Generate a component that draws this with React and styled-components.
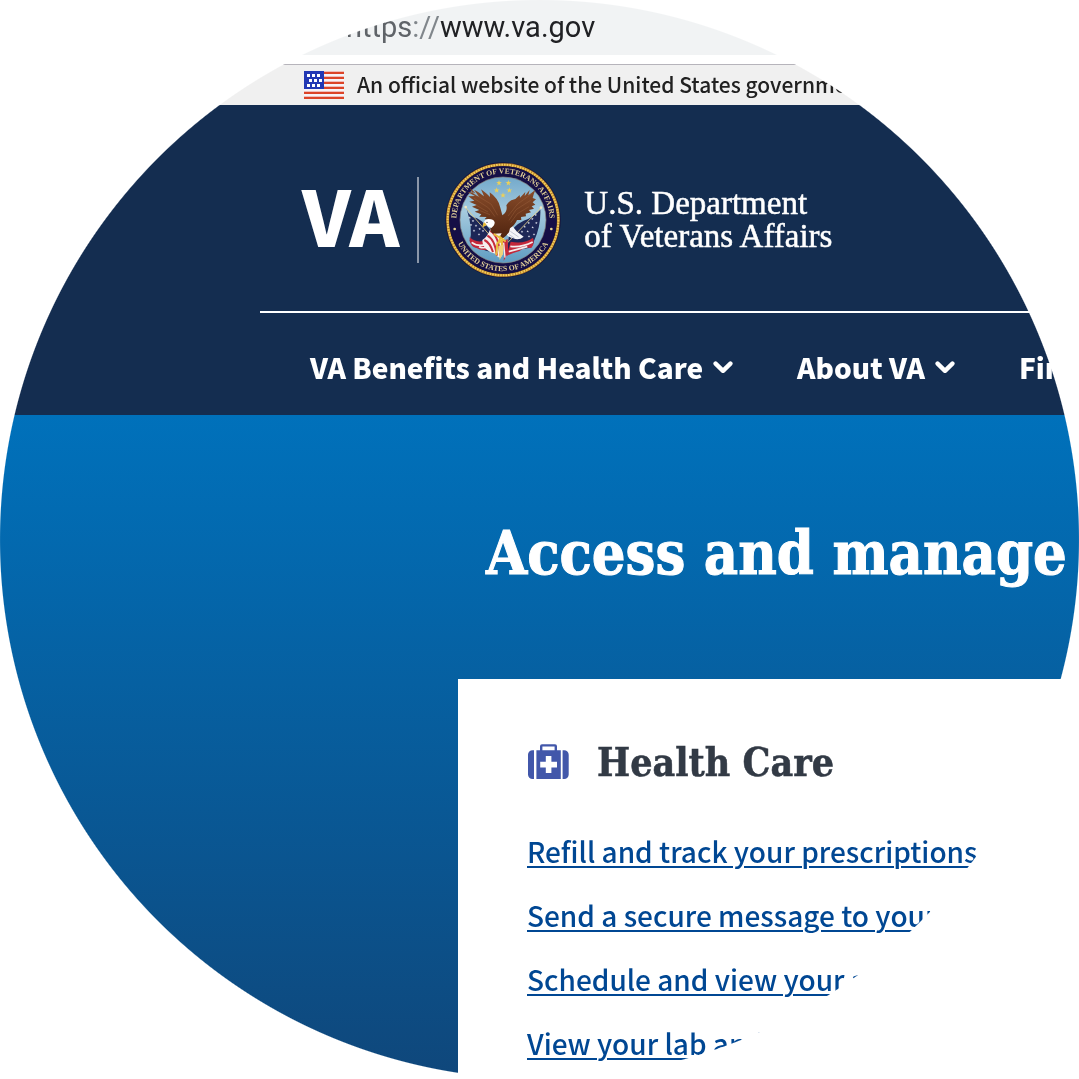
import React from "react";
import styled, { createGlobalStyle } from "styled-components";

const sans = '"Noto Sans CJK SC", "Noto Sans", sans-serif';
const slab = '"DejaVu Serif Condensed", "DejaVu Serif", serif';

const GlobalStyle = createGlobalStyle`
  *, *::before, *::after { box-sizing: border-box; }
  body { margin: 0; background: #fff; font-family: ${sans}; }
  h1, h2, ul { margin: 0; padding: 0; }
`;

const Lens = styled.div`
  width: 100%;
  aspect-ratio: 1;
  overflow: hidden;
  mask-image: radial-gradient(closest-side, #000 99.9%, transparent 100.1%);
  display: flex;
  flex-direction: column;
  white-space: nowrap;
  background: #fff;
`;

const AddressBar = styled.div`
  flex: none;
  padding-left: 346px;
  margin-bottom: 9px;
  background: #f1f3f4;
  color: #202124;
  font: 29px/55px Roboto, sans-serif;
`;

const Scheme = styled.span`
  color: ${(p) => (p.$light ? "#80868b" : "#5f6368")};
`;

const Banner = styled.div`
  flex: none;
  display: flex;
  align-items: center;
  gap: 13px;
  height: 41px;
  padding-left: 304px;
  border-top: 1px solid #b6b4bb;
  background: #f0f0f0;
  color: #212121;
`;

const BannerText = styled.span`
  padding-bottom: 3px;
  font-size: 21px;
  font-weight: 500;
  line-height: 32px;
`;

const Header = styled.header`
  flex: none;
  padding-left: 260px;
  background: #142d50;
  color: #fff;
`;

const Brand = styled.a`
  display: flex;
  align-items: center;
  padding: 57px 0 33px 42px;
  color: #fff;
  text-decoration: none;
`;

const Monogram = styled.span`
  padding-bottom: 12px;
  font-size: 76px;
  font-weight: 900;
  line-height: 78px;
`;

const Divider = styled.span`
  width: 2px;
  height: 86px;
  margin: 0 26px 0 18px;
  background: #8b97a9;
`;

const Department = styled.span`
  display: flex;
  flex-direction: column;
  margin-left: 23px;
  font: 33px/33px "Liberation Serif", serif;
  -webkit-text-stroke: 0.5px #fff;
`;

const Nav = styled.nav`
  display: flex;
  gap: 64px;
  padding: 33px 0 26px 50px;
  border-top: 2px solid #fff;
`;

const NavButton = styled.button`
  display: flex;
  align-items: center;
  gap: 10px;
  flex: none;
  padding: 0;
  border: 0;
  background: none;
  color: #fff;
  font: 900 28px/43px ${sans};
  cursor: pointer;
`;

const Hero = styled.main`
  flex: 1;
  display: flex;
  flex-direction: column;
  padding-left: 458px;
  background: linear-gradient(#0071bb, #0f477b);
`;

const Title = styled.h1`
  padding: 99px 0 85px 28px;
  color: #fff;
  font: 700 59px/80px ${slab};
  -webkit-text-stroke: 1px #fff;
`;

const Card = styled.section`
  flex: 1;
  padding: 53px 0 0 69px;
  background: #fff;
`;

const CardHead = styled.div`
  display: flex;
  align-items: center;
  gap: 28px;
  margin-bottom: 27px;
`;

const CardTitle = styled.h2`
  color: #323a45;
  font: 700 39px/60px ${slab};
  -webkit-text-stroke: 0.5px #323a45;
`;

const Links = styled.ul`
  list-style: none;
  font-size: 28px;
  font-weight: 500;
  line-height: 64px;
`;

const Link = styled.a`
  color: #004793;
  text-decoration: underline;
  text-decoration-thickness: 2px;
  text-underline-offset: 3px;
`;

function Flag() {
  const stars = [0, 1, 2].flatMap((row) =>
    [0, 1, 2].map((col) => (
      <rect key={`${row}${col}`} x={3 + col * 5 + (row === 1 ? 2 : 0)} y={3 + row * 5} width="3" height="3" fill="#fff" />
    ))
  );
  return (
    <svg width="40" height="28" viewBox="0 0 40 28" aria-hidden="true">
      <rect width="40" height="28" fill="#f6f3f8" />
      {[0, 5, 10, 15, 20, 25].map((y) => (
        <rect key={y} y={y + 0.7} width="40" height="2.3" fill="#dc4428" />
      ))}
      <rect width="20" height="18" fill="#2238b4" />
      {stars}
    </svg>
  );
}

function Chevron() {
  return (
    <svg width="20" height="14" viewBox="0 0 20 14" fill="none" stroke="#fff" strokeWidth="4.4" strokeLinecap="round" strokeLinejoin="round" aria-hidden="true">
      <path d="M2.6 2.6 10 9.8l7.4-7.2" />
    </svg>
  );
}

function MedicalCase() {
  return (
    <svg width="42" height="36" viewBox="-1 0 42 36" fill="#4257aa" aria-hidden="true">
      <path d="M6 6.3V35H4.5A4.5 4.5 0 0 1 0 30.5V10.8A4.5 4.5 0 0 1 4.5 6.3ZM34.6 6.3V35h1.6a4.5 4.5 0 0 0 4.5-4.5V10.8a4.5 4.5 0 0 0-4.5-4.5Z" />
      <path d="M12 6.3V2.2Q12 .2 14 .2H27Q29 .2 29 2.2V6.3H32.8V35H8.4V6.3ZM14.4 6.3H26.6V2.6H14.4ZM17.8 12V17.7H12.2V23.4H17.8V29H23.4V23.4H29V17.7H23.4V12Z" fillRule="evenodd" />
    </svg>
  );
}

const starPath = "M0-9 2.1-2.8 8.6-2.8 3.4 1.1 5.3 7.3 0 3.5-5.3 7.3-3.4 1.1-8.6-2.8-2.1-2.8Z";

function Seal() {
  const heavenStars = [[176, 84], [204, 84], [169, 106], [207, 106], [188, 121]];
  const leftStars = [[88, 188], [98, 198], [92, 210], [107, 212], [118, 222], [101, 227], [116, 238], [128, 228]];
  const rightStars = [[286, 180], [276, 192], [288, 204], [265, 204], [277, 217], [253, 215], [262, 229], [245, 230], [281, 238], [266, 244]];
  return (
    <svg width="116" height="116" viewBox="14 21 348 348" role="img" aria-label="Seal of the U.S. Department of Veterans Affairs">
      <defs>
        <path id="sealTop" d="M50 219A140 140 0 1 1 326 219" />
        <path id="sealBottom" d="M39 230A153 153 0 0 0 337 230" />
        <linearGradient id="sky" x1="0" y1="0" x2="0" y2="1">
          <stop offset="0" stopColor="#72a9cb" />
          <stop offset=".4" stopColor="#a5cade" />
          <stop offset="1" stopColor="#5f9dc2" />
        </linearGradient>
        <linearGradient id="feathers" x1="0" y1="0" x2="0" y2="1">
          <stop offset="0" stopColor="#8a4d2b" />
          <stop offset="1" stopColor="#50240f" />
        </linearGradient>
      </defs>
      <circle cx="188" cy="195" r="173" fill="#17133b" />
      <circle cx="188" cy="195" r="166" fill="none" stroke="#b98529" strokeWidth="9" />
      <circle cx="188" cy="195" r="166" fill="none" stroke="#f4cd5c" strokeWidth="6" strokeDasharray="5 3" />
      <circle cx="188" cy="195" r="161" fill="#150f46" />
      <circle cx="188" cy="195" r="129" fill="url(#sky)" stroke="#8d8a7e" strokeWidth="2" />
      <g fill="#e0cf98" fontFamily="Liberation Serif, serif" fontSize="23" fontWeight="700" textAnchor="middle">
        <text><textPath href="#sealTop" startOffset="50%">DEPARTMENT OF VETERANS AFFAIRS</textPath></text>
        <text><textPath href="#sealBottom" startOffset="50%">UNITED STATES OF AMERICA</textPath></text>
      </g>
      <circle cx="43" cy="222" r="4" fill="#e6d291" />
      <circle cx="333" cy="222" r="4" fill="#e6d291" />
      {heavenStars.map(([x, y]) => (
        <path key={`${x}${y}`} d={starPath} transform={`translate(${x} ${y})`} fill="#ecd058" />
      ))}

      <path d="M79 162Q86 186 110 190 138 204 164 244L168 289Q142 294 119 278 100 282 88 258 99 224 79 162Z" fill="#1d2757" />
      <path d="M300 164Q280 187 250 197 218 212 206 242L198 296Q226 291 250 280 278 283 281 258 302 214 300 164Z" fill="#1d2757" />
      <path d="M88 247Q105 263 128 258L143 284Q121 288 107 278 94 278 88 258Z" fill="#c3283a" />
      <path d="M94 262Q112 276 138 269M116 275Q130 282 150 274" fill="none" stroke="#f4eded" strokeWidth="5" />
      <path d="M211 260Q252 268 278 248 284 267 273 279 252 276 238 288 214 294 199 303Z" fill="#c3283a" />
      <path d="M210 274Q244 278 277 261M205 290Q231 283 261 275" fill="none" stroke="#f4eded" strokeWidth="5" />
      <path d="M76 158 174 270M302 158 197 268" fill="none" stroke="#e5cf83" strokeWidth="2.5" />
      <circle cx="76" cy="156" r="4" fill="#f1e7c4" />
      <circle cx="302" cy="158" r="4" fill="#f1e7c4" />
      {[...leftStars, ...rightStars].map(([x, y]) => (
        <path key={`${x}-${y}`} d={starPath} transform={`translate(${x} ${y}) scale(.45)`} fill="#e5e8f3" />
      ))}

      <path d="M190 195Q217 210 230 230L250 245Q236 257 219 250 205 249 196 235Z" fill="#f4f5f8" />
      <path d="M210 229 235 246M205 238 222 249" stroke="#aab3c3" strokeWidth="2" />
      <path d="M150 222Q178 220 192 240L188 297Q178 318 165 296 127 287 126 255 140 248 150 222Z" fill="#f5efee" />
      <path d="M132 255Q149 263 158 291M141 242Q163 252 170 302M150 228Q175 242 180 302" fill="none" stroke="#c72c3b" strokeWidth="6" />
      <path d="M184 260Q194 280 190 318L204 292 202 252Z" fill="#c72c3b" />
      <path d="M190 263 194 308" stroke="#f5efee" strokeWidth="4" />
      <path d="M88 99Q96 119 116 125L101 104Q122 115 131 124L122 103Q142 118 149 126L148 112Q174 130 180 158L186 181Q203 169 198 151 207 134 225 132L238 120 239 128 255 111 253 123 268 105 264 121 285 105Q279 119 277 129L287 133 277 142 285 149 274 154 281 161 266 165 272 172 256 176 257 184 242 186 243 195 230 195Q224 210 209 220L206 232Q196 245 188 250L177 248 184 235 162 236Q145 233 152 213 159 205 149 196L133 192 139 186 117 185 123 178 103 170 117 165 95 155 109 150 87 140 102 137 84 124 104 123 82 111 105 113Z" fill="url(#feathers)" />
      <path d="M101 116 153 148 172 181M101 130 145 159 164 185M108 151 143 171M119 167 149 179M274 116 232 147 203 183M271 136 227 164 206 196M266 155 231 176 211 203" fill="none" stroke="#a56a43" strokeWidth="2.5" opacity=".45" />
      <path d="M152 193Q136 189 131 201L127 214Q133 213 139 210 142 216 153 219 164 211 163 201 160 194 152 193Z" fill="#fff" />
      <path d="M133 202Q125 207 128 217L139 210Z" fill="#e6ba35" />
      <circle cx="140" cy="202" r="2" fill="#26242a" />
      <path d="M162 238 180 249 174 263 185 257 184 298M178 245 194 258M171 264 168 298" fill="none" stroke="#e8bb3b" strokeWidth="6" strokeLinecap="round" strokeLinejoin="round" />
      <path d="M174 273 178 315 187 297 190 269" fill="#efd37b" />
    </svg>
  );
}

const menus = ["VA Benefits and Health Care", "About VA", "Find"];
const tasks = [
  "Refill and track your prescriptions",
  "Send a secure message to your",
  "Schedule and view your appointments",
  "View your lab and",
];

export default function App() {
  return (
    <>
      <GlobalStyle />
      <Lens>
        <AddressBar>
          <Scheme>https</Scheme>
          <Scheme $light>://</Scheme>
          www.va.gov
        </AddressBar>
        <Banner>
          <Flag />
          <BannerText>An official website of the United States government</BannerText>
        </Banner>
        <Header>
          <Brand href="#home">
            <Monogram>VA</Monogram>
            <Divider />
            <Seal />
            <Department>
              <span>U.S. Department</span>
              <span>of Veterans Affairs</span>
            </Department>
          </Brand>
          <Nav>
            {menus.map((label) => (
              <NavButton key={label} type="button">
                {label}
                <Chevron />
              </NavButton>
            ))}
          </Nav>
        </Header>
        <Hero>
          <Title>Access and manage</Title>
          <Card>
            <CardHead>
              <MedicalCase />
              <CardTitle>Health Care</CardTitle>
            </CardHead>
            <Links>
              {tasks.map((label) => (
                <li key={label}>
                  <Link href="#task">{label}</Link>
                </li>
              ))}
            </Links>
          </Card>
        </Hero>
      </Lens>
    </>
  );
}
